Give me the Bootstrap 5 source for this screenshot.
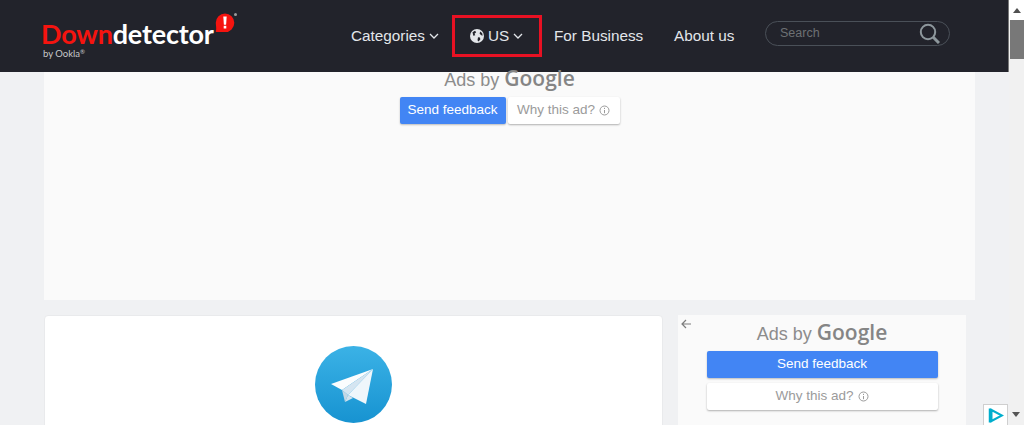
<!DOCTYPE html>
<html lang="en">

<head>
    <meta charset="UTF-8">
    <title>Downdetector</title>
    <link href="https://cdn.jsdelivr.net/npm/bootstrap@5.3.3/dist/css/bootstrap.min.css" rel="stylesheet">
    <style>
        html, body { height: 425px; overflow: hidden; }
        body { font-family: "Liberation Sans", Arial, sans-serif; background: #f0f1f3; }
        .page-main { width: 1009px; height: 425px; overflow: hidden; }
        .top-head { height: 72px; background: #22232b; padding-left: 43px; border-right: 1px solid #7a7a7a; }
        .logo-wrap { width: 308px; height: 72px; }
        .logo-word { font-family: Lato, sans-serif; font-weight: 700; font-size: 27px; line-height: 22px; color: #fff; letter-spacing: -.2px; margin: 23px 0 1px -2px; }
        .logo-word span { color: #f5140f; }
        .logo-by { font-family: Lato, sans-serif; font-size: 9.5px; line-height: 11px; color: #c9cacc; white-space: nowrap; }
        .logo-by i { font-style: normal; font-size: 6px; vertical-align: 3px; }
        .logo-alert { left: 172px; top: 13px; }
        .logo-reg { left: 191px; top: 13px; width: 3px; height: 3px; border-radius: 50%; background: #9a9a9a; }
        .head-link { color: #e3e6ea; font-size: 15.3px; text-decoration: none; white-space: nowrap; }
        .head-cat { width: 101px; }
        .head-us { width: 90px; height: 42px; border: 3px solid #e81123; padding-left: 15px; }
        .head-biz { margin-left: 12px; width: 90px; }
        .head-about { margin-left: 30px; width: 60px; }
        .search-box { margin-left: 31px; margin-bottom: 5px; width: 185px; height: 25px; border: 1px solid #4a5058; border-radius: 13px; padding: 0 9px 0 14px; }
        .search-box span { color: #6d7073; font-size: 12.5px; }
        .ad-wide { width: 931px; height: 228px; margin-left: 44px; background: #fafafa; }
        .ads-by { color: #8c8c8c; font-size: 18px; line-height: 20px; white-space: nowrap; }
        .ads-by b { font-family: "Open Sans", sans-serif; font-weight: 600; font-size: 21px; color: #858585; }
        .ad-send { background: #4285f4; color: #fff; font-size: 13.5px; border-radius: 2px; box-shadow: 0 1px 2px rgba(0,0,0,.25); }
        .ad-why { background: #fff; color: #9b9b9b; font-size: 13.5px; border-radius: 2px; box-shadow: 0 1px 2px rgba(0,0,0,.3); }
        .wide-title { margin-top: -4px; }
        .wide-btns { margin-top: 7px; }
        .ad-send-top { width: 106px; height: 27px; }
        .ad-why-top { width: 112px; height: 27px; margin-left: 2px; }
        .lower-row { margin: 15px 0 0 44px; gap: 15px; }
        .tg-card { width: 619px; height: 200px; background: #fff; border: 1px solid #e9eaec; border-radius: 4px; padding-top: 30px; }
        .ad-side { width: 288px; height: 200px; background: #fafafa; }
        .side-title { margin-top: 7px; }
        .side-arrow { left: 2px; top: 3px; }
        .ad-send-side { width: 231px; height: 27px; margin-top: 7px; }
        .ad-why-side { width: 231px; height: 27px; margin-top: 5px; }
        .fake-scroll { width: 15px; height: 425px; background: #f1f1f1; }
        .scroll-up { height: 20px; background: #fff; }
        .scroll-thumb { height: 39px; width: 14px; margin-left: 1px; background: #787878; }
        .corner-ad { right: 16px; bottom: 0; width: 25px; height: 21px; background: #fff; border: 1px solid #cfcfcf; border-bottom: 0; }
        .corner-drop { right: 0; bottom: 0; width: 16px; height: 21px; }
    </style>
</head>

<body class="d-flex position-relative">
    <div class="page-main flex-shrink-0">
        <!-- Header -->
        <header class="top-head d-flex align-items-center">
            <div class="logo-wrap position-relative flex-shrink-0">
                <div class="logo-word"><span>Down</span>detector</div>
                <div class="logo-by">by Ookla<i>®</i></div>
                <svg class="logo-alert position-absolute" width="20" height="20" viewBox="0 0 20 20">
                    <path d="M10 .5a9.300 9.300 0 0 1 0 18.600H2c-1.300 0-1.700-.8-1-1.800C1.500 16.500 1 13 .8 9.800A9.300 9.300 0 0 1 10 .5z" fill="#f5140f"/>
                    <path d="M8.300 3.500h3.400l-.6 8.200H8.900z" fill="#fff"/>
                    <rect x="8.700" y="12.800" width="2.600" height="2.700" fill="#fff"/>
                </svg>
                <div class="logo-reg position-absolute"></div>
            </div>
            <a class="head-link head-cat d-flex align-items-center gap-1" href="#">Categories
                <svg width="10" height="6" viewBox="0 0 10 6"><path d="M1 1l4 4 4-4" fill="none" stroke="#e3e6ea" stroke-width="1.300"/></svg>
            </a>
            <a class="head-link head-us d-flex align-items-center" href="#">
                <svg width="14" height="14" viewBox="0 0 14 14" class="me-1">
                    <circle cx="7" cy="7" r="7" fill="#e3e6ea"/>
                    <path d="M2.500 3.200L5 1.800l1.200 1.400-1.700 1.500.8 1.600-2 .4zM8 8.200l2 .3.300 2-1.800 2-1-1.300zM10.500 2.600l1.800 2 .3 2.200-1.800-.8-1.300-1.700z" fill="#22232b"/>
                </svg>
                US
                <svg width="10" height="6" viewBox="0 0 10 6" class="ms-1"><path d="M1 1l4 4 4-4" fill="none" stroke="#e3e6ea" stroke-width="1.300"/></svg>
            </a>
            <a class="head-link head-biz" href="#">For Business</a>
            <a class="head-link head-about" href="#">About us</a>
            <div class="search-box d-flex align-items-center justify-content-between">
                <span>Search</span>
                <svg width="21" height="21" viewBox="0 0 21 21"><circle cx="9" cy="9" r="7.200" fill="none" stroke="#8d979c" stroke-width="2"/><path d="M14 14l6 6" stroke="#8d979c" stroke-width="3"/></svg>
            </div>
        </header>

        <!-- Wide ad -->
        <section class="ad-wide d-flex flex-column align-items-center">
            <div class="ads-by text-center wide-title">Ads by <b>Google</b></div>
            <div class="d-flex wide-btns">
                <div class="ad-send ad-send-top d-flex align-items-center justify-content-center">Send feedback</div>
                <div class="ad-why ad-why-top d-flex align-items-center justify-content-center gap-1">Why this ad?
                    <svg width="11" height="11" viewBox="0 0 11 11"><circle cx="5.500" cy="5.500" r="4.500" fill="none" stroke="#9b9b9b"/><path d="M5.500 5v3.200M5.500 2.800v1.200" stroke="#9b9b9b"/></svg>
                </div>
            </div>
        </section>

        <!-- Lower row -->
        <div class="lower-row d-flex">
            <div class="tg-card d-flex justify-content-center">
                <svg width="77" height="77" viewBox="0 0 77 77">
                    <defs>
                        <linearGradient id="tgbg" x1="0" y1="0" x2="0" y2="1"><stop offset="0" stop-color="#3bb2e6"/><stop offset="1" stop-color="#1793d1"/></linearGradient>
                    </defs>
                    <circle cx="38.500" cy="38.500" r="38.500" fill="url(#tgbg)"/>
                    <path d="M27 44l3 12 3-7z" fill="#c3d6e4"/>
                    <path d="M30 56l3-7 5 3z" fill="#d3e2ee"/>
                    <path d="M58 23L16 38l11 6z" fill="#fbfdfe"/>
                    <path d="M58 23L27 44l6 5z" fill="#d5e5f1"/>
                    <path d="M58 23L33 49l18 9z" fill="#eff6fb"/>
                </svg>
            </div>
            <aside class="ad-side d-flex flex-column align-items-center position-relative">
                <svg class="side-arrow position-absolute" width="12" height="12" viewBox="0 0 12 12"><path d="M11 6H2M6 2L2 6l4 4" fill="none" stroke="#7d7d7d" stroke-width="1.200"/></svg>
                <div class="ads-by text-center side-title">Ads by <b>Google</b></div>
                <div class="ad-send ad-send-side d-flex align-items-center justify-content-center">Send feedback</div>
                <div class="ad-why ad-why-side d-flex align-items-center justify-content-center gap-1">Why this ad?
                    <svg width="11" height="11" viewBox="0 0 11 11"><circle cx="5.500" cy="5.500" r="4.500" fill="none" stroke="#9b9b9b"/><path d="M5.500 5v3.200M5.500 2.800v1.200" stroke="#9b9b9b"/></svg>
                </div>
            </aside>
        </div>
    </div>

    <!-- Scrollbar -->
    <div class="fake-scroll flex-shrink-0">
        <div class="scroll-up d-flex align-items-center justify-content-center">
            <svg width="8" height="5" viewBox="0 0 8 5"><path d="M4 0l4 5H0z" fill="#505050"/></svg>
        </div>
        <div class="scroll-thumb"></div>
    </div>

    <!-- Corner ad badge -->
    <div class="corner-ad position-absolute d-flex align-items-center justify-content-center">
        <svg width="16" height="17" viewBox="0 0 16 17"><path d="M2 1.500v14" stroke="#00aecd" stroke-width="2.500"/><path d="M3.500 3L14 8.500 3.500 14z" fill="none" stroke="#00aecd" stroke-width="2"/></svg>
    </div>
    <div class="corner-drop position-absolute d-flex align-items-center justify-content-center">
        <svg width="8" height="5" viewBox="0 0 8 5"><path d="M0 0h8L4 5z" fill="#555"/></svg>
    </div>
</body>

</html>
